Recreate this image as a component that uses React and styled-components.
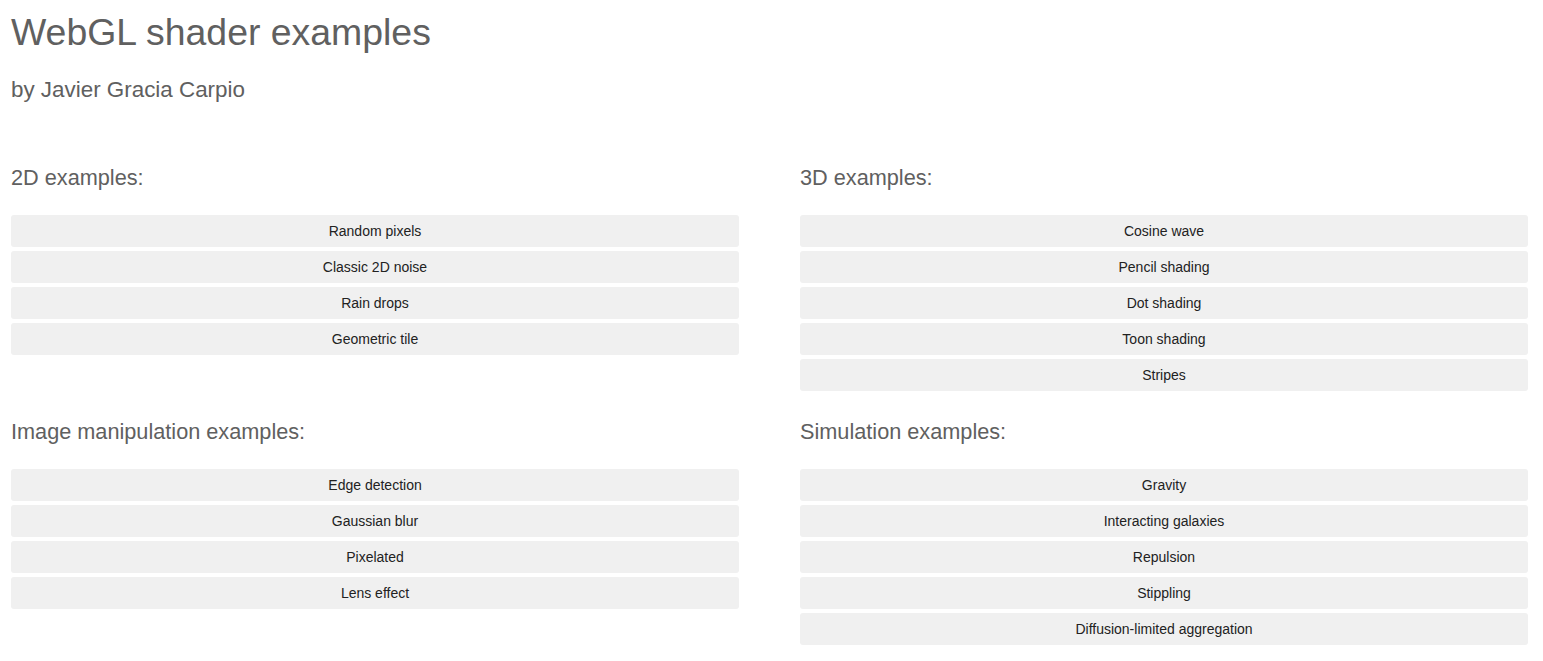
import React from "react";
import styled, { createGlobalStyle } from "styled-components";

const GlobalStyle = createGlobalStyle`
  body {
    margin: 0;
    background: #fff;
    font-family: "Liberation Sans", Arial, sans-serif;
  }
`;

const Page = styled.div`
  padding: 11px 11px 20px;
`;

const Title = styled.h1`
  margin: 0;
  font-size: 37.4px;
  line-height: 1.15;
  font-weight: normal;
  color: #606060;
`;

const Author = styled.h2`
  margin: 23px 0 0;
  font-size: 22.4px;
  line-height: 1.15;
  font-weight: normal;
  color: #606060;
`;

const Sections = styled.div`
  display: grid;
  grid-template-columns: repeat(2, 728px);
  column-gap: 61px;
  row-gap: 29px;
  margin-top: 63px;
`;

const Section = styled.section`
  display: flex;
  flex-direction: column;
`;

const Heading = styled.h3`
  margin: 0 0 24px;
  font-size: 21.7px;
  line-height: 1.15;
  font-weight: normal;
  color: #606060;
`;

const List = styled.div`
  display: flex;
  flex-direction: column;
  gap: 4px;
`;

const Item = styled.a`
  display: block;
  height: 32px;
  line-height: 32px;
  text-align: center;
  font-size: 14px;
  color: #222;
  background: #f0f0f0;
  border-radius: 3px;
  text-decoration: none;
  cursor: pointer;
`;

const sections = [
  {
    title: "2D examples:",
    items: ["Random pixels", "Classic 2D noise", "Rain drops", "Geometric tile"],
  },
  {
    title: "3D examples:",
    items: ["Cosine wave", "Pencil shading", "Dot shading", "Toon shading", "Stripes"],
  },
  {
    title: "Image manipulation examples:",
    items: ["Edge detection", "Gaussian blur", "Pixelated", "Lens effect"],
  },
  {
    title: "Simulation examples:",
    items: [
      "Gravity",
      "Interacting galaxies",
      "Repulsion",
      "Stippling",
      "Diffusion-limited aggregation",
    ],
  },
];

const App = () => {
  return (
    <Page>
      <GlobalStyle />
      <Title>WebGL shader examples</Title>
      <Author>by Javier Gracia Carpio</Author>
      <Sections>
        {sections.map((s) => (
          <Section key={s.title}>
            <Heading>{s.title}</Heading>
            <List>
              {s.items.map((item) => (
                <Item key={item}>{item}</Item>
              ))}
            </List>
          </Section>
        ))}
      </Sections>
    </Page>
  );
};

export default App;
